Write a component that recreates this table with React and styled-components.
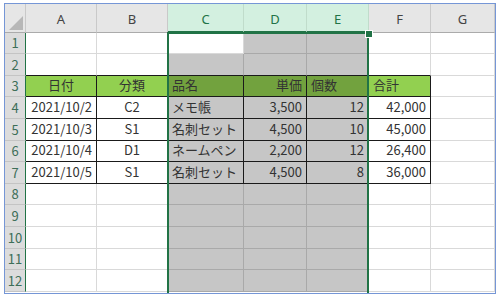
import React from "react";
import styled, { createGlobalStyle } from "styled-components";

const GREEN = "#217346";
const LEAF = "#92d050";
const LEAF_SEL = "#72a23e";
const SEL = "#c6c6c6";

const columns = [
  { key: "A", w: 71 },
  { key: "B", w: 71 },
  { key: "C", w: 76 },
  { key: "D", w: 63 },
  { key: "E", w: 62 },
  { key: "F", w: 62 },
  { key: "G", w: 64 },
];
const rowHeights = [21, 22, 21, 22, 22, 21, 22, 21, 22, 22, 21, 22];

// A3:F7 の売上表
const table = [
  [
    { t: "日付", a: "center" },
    { t: "分類", a: "center" },
    { t: "品名", a: "left" },
    { t: "単価", a: "right" },
    { t: "個数", a: "left" },
    { t: "合計", a: "left" },
  ],
  ["2021/10/2", "C2", "メモ帳", "3,500", "12", "42,000"],
  ["2021/10/3", "S1", "名刺セット", "4,500", "10", "45,000"],
  ["2021/10/4", "D1", "ネームペン", "2,200", "12", "26,400"],
  ["2021/10/5", "S1", "名刺セット", "4,500", "8", "36,000"],
];
const bodyAlign = ["right", "center", "left", "right", "right", "right"];

const isSelCol = (c) => c >= 2 && c <= 4;

const GlobalStyle = createGlobalStyle`
  html, body {
    margin: 0;
    background: #ffffff;
  }
  body {
    font-family: "Noto Sans CJK JP", "Noto Sans", sans-serif;
  }
`;

const Frame = styled.div`
  margin: 3px 0 0 4px;
  width: 490px;
  height: 289px;
  border: 1px solid #7596d6;
  position: relative;
  overflow: hidden;
  background: #ffffff;
`;

const Sheet = styled.div`
  display: grid;
  grid-template-columns: 21px ${columns.map((c) => c.w + "px").join(" ")};
  grid-template-rows: 29px ${rowHeights.map((h) => h + "px").join(" ")};
  font-size: 13px;
  color: #333;
`;

const Corner = styled.div`
  background: #e6e6e6;
  border-right: 1px solid #c9c9c9;
  border-bottom: 1px solid #ababab;
  box-sizing: border-box;
  position: relative;
  &::after {
    content: "";
    position: absolute;
    right: 2px;
    bottom: 2px;
    border-style: solid;
    border-width: 0 0 14px 14px;
    border-color: transparent transparent #b7b7b7 transparent;
  }
`;

const ColHead = styled.div`
  box-sizing: border-box;
  display: flex;
  align-items: center;
  justify-content: center;
  padding-top: 2px;
  font-family: "Noto Sans", "Liberation Sans", sans-serif;
  font-size: 13px;
  background: ${({ $sel }) => ($sel ? "#d3f0e0" : "#e6e6e6")};
  color: ${({ $sel }) => ($sel ? GREEN : "#444")};
  border-right: 1px solid ${({ $sel }) => ($sel ? "#c0dccb" : "#c9c9c9")};
  border-bottom: ${({ $sel }) => ($sel ? `2px solid ${GREEN}` : "1px solid #ababab")};
`;

const RowHead = styled.div`
  box-sizing: border-box;
  display: flex;
  align-items: flex-end;
  justify-content: center;
  padding-bottom: 1px;
  background: #dcdcdc;
  color: #3d6e58;
  font-size: 13px;
  border-right: 1px solid ${GREEN};
  border-bottom: 1px solid #c4c4c4;
`;

const Cell = styled.div`
  box-sizing: border-box;
  display: flex;
  align-items: flex-end;
  padding: 0 4px 2px;
  white-space: nowrap;
  overflow: hidden;
  justify-content: ${({ $align }) =>
    $align === "right" ? "flex-end" : $align === "center" ? "center" : "flex-start"};
  background: ${({ $bg }) => $bg};
  border-right: 1px solid ${({ $right }) => $right};
  border-bottom: 1px solid ${({ $bottom }) => $bottom};
`;

const Selection = styled.div`
  position: absolute;
  left: 162px;
  top: 28px;
  width: 202px;
  height: 400px;
  border: 2px solid ${GREEN};
  box-sizing: border-box;
  pointer-events: none;
`;

const FillHandle = styled.div`
  position: absolute;
  left: 360px;
  top: 26px;
  width: 6px;
  height: 6px;
  background: ${GREEN};
  border: 1px solid #ffffff;
`;

function cellProps(r, c) {
  // r: 1-based sheet row, c: 0-based column index
  const sel = isSelCol(c) && !(r === 1 && c === 2);
  const inTable = r >= 3 && r <= 7 && c <= 5;
  let bg = "#ffffff";
  if (r === 3 && c <= 5) bg = sel ? LEAF_SEL : LEAF;
  else if (sel) bg = SEL;

  const grid = sel ? "#a9a9a9" : "#d9d9d9";
  const right = inTable ? "#1a1a1a" : grid;
  const bottom = inTable || (r === 2 && c <= 5) ? "#1a1a1a" : grid;

  let text = "";
  let align = "left";
  if (r === 3 && c <= 5) {
    text = table[0][c].t;
    align = table[0][c].a;
  } else if (r >= 4 && r <= 7 && c <= 5) {
    text = table[r - 3][c];
    align = bodyAlign[c];
  }
  return { bg, right, bottom, text, align };
}

export default function App() {
  return (
    <>
      <GlobalStyle />
      <Frame>
        <Sheet>
          <Corner />
          {columns.map((col, c) => (
            <ColHead key={col.key} $sel={isSelCol(c)}>
              {col.key}
            </ColHead>
          ))}
          {rowHeights.map((_, i) => {
            const r = i + 1;
            return (
              <React.Fragment key={r}>
                <RowHead>{r}</RowHead>
                {columns.map((col, c) => {
                  const p = cellProps(r, c);
                  return (
                    <Cell
                      key={col.key + r}
                      $bg={p.bg}
                      $right={p.right}
                      $bottom={p.bottom}
                      $align={p.align}
                    >
                      {p.text}
                    </Cell>
                  );
                })}
              </React.Fragment>
            );
          })}
        </Sheet>
        <Selection />
        <FillHandle />
      </Frame>
    </>
  );
}
